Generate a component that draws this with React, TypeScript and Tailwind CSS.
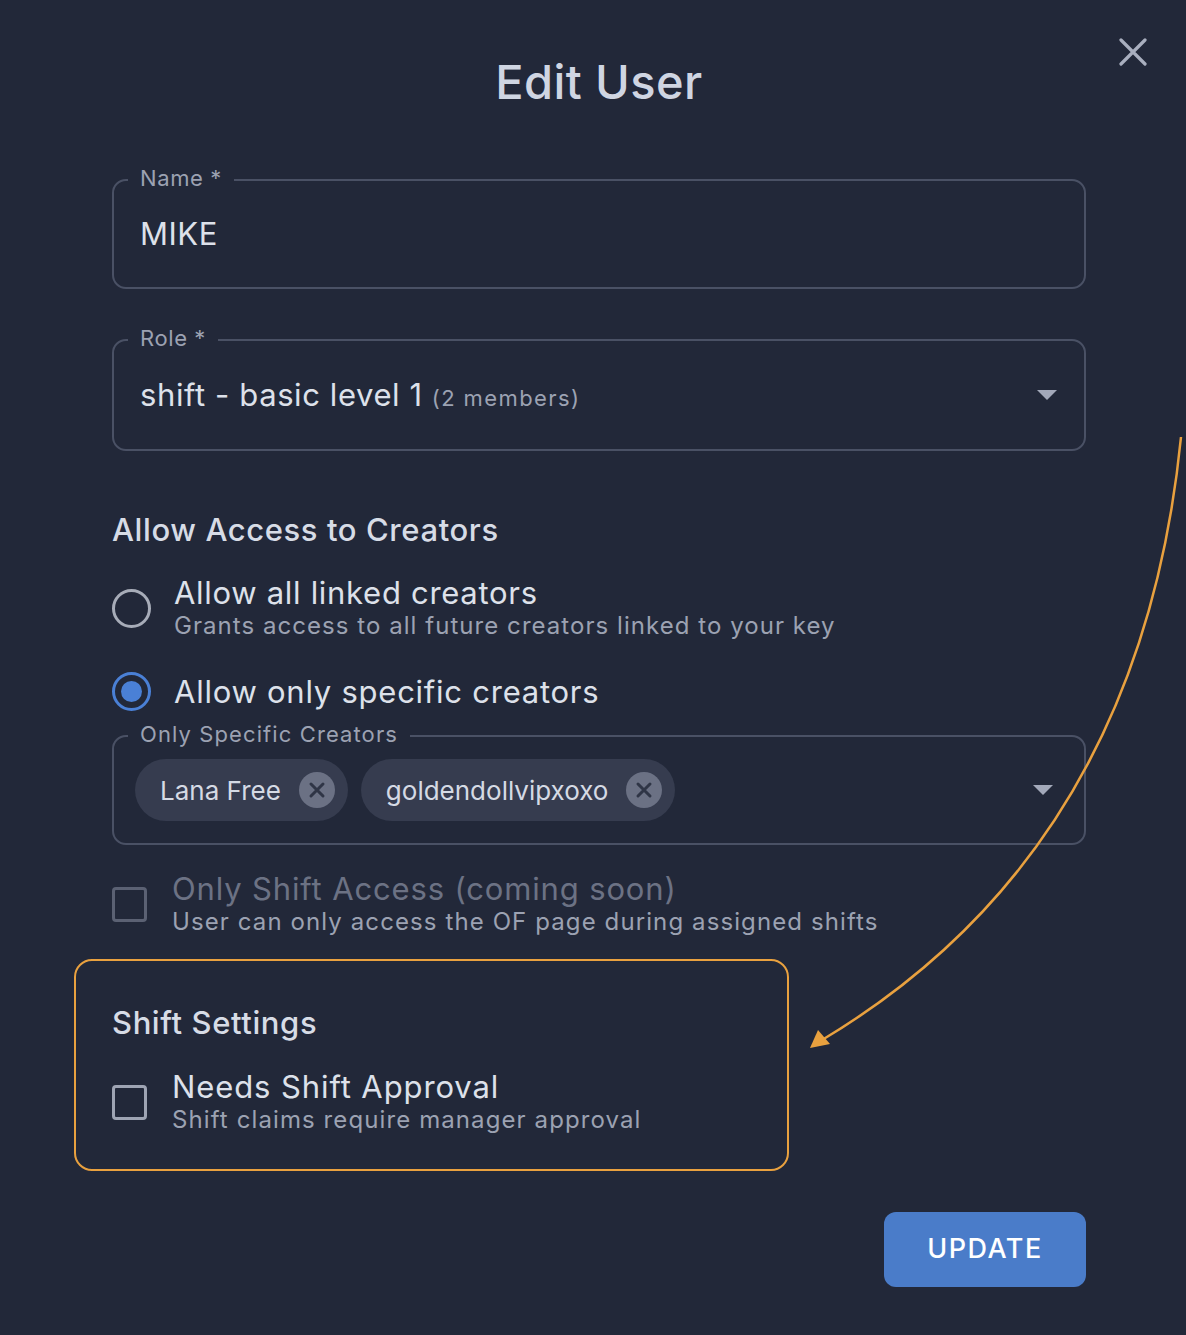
import React from 'react';

const font = { fontFamily: 'Inter, "Noto Sans", sans-serif' };

const Caret = () => (
  <svg width="22" height="12" viewBox="0 0 22 12" className="shrink-0">
    <path d="M1 1h20L11 11z" fill="#a3a9ba" />
  </svg>
);

const Chip = ({ label }: { label: string }) => (
  <div className="flex items-center h-[62px] rounded-full bg-[#363c4f] pl-[25px] pr-[13px] gap-[18px]">
    <span className="text-[26px] text-[#d5dae4]">{label}</span>
    <span className="w-[36px] h-[36px] rounded-full bg-[#6b7184] flex items-center justify-center">
      <svg width="18" height="18" viewBox="0 0 18 18">
        <path d="M3 3l12 12M15 3L3 15" stroke="#2f3546" strokeWidth="3" strokeLinecap="round" />
      </svg>
    </span>
  </div>
);

const Radio = ({ checked }: { checked?: boolean }) =>
  checked ? (
    <span className="w-[39px] h-[39px] rounded-full border-[3px] border-[#4a80d6] flex items-center justify-center shrink-0">
      <span className="w-[21px] h-[21px] rounded-full bg-[#4a80d6]" />
    </span>
  ) : (
    <span className="w-[39px] h-[39px] rounded-full border-[3px] border-[#a7acb8] shrink-0" />
  );

const Check = ({ dim }: { dim?: boolean }) => (
  <span
    className={`w-[35px] h-[35px] rounded-[4px] border-[3px] shrink-0 ${dim ? 'border-[#5b6173]' : 'border-[#9ea4b3]'}`}
  />
);

export default function App() {
  return (
    <div style={font} className="relative w-full min-h-[1335px] bg-[#222839] text-[#d7dce6] overflow-hidden">
      {/* close */}
      <button className="absolute top-[38px] left-[1119px]">
        <svg width="28" height="28" viewBox="0 0 28 28">
          <path d="M2 2l24 24M26 2L2 26" stroke="#a9afbf" strokeWidth="3.2" strokeLinecap="round" />
        </svg>
      </button>

      <h1 className="pt-[52px] pl-[12px] text-center text-[47px] leading-[60px] font-medium tracking-[0.4px] text-[#cfd5e2]">
        Edit User
      </h1>

      <div className="ml-[112px] w-[974px] flex flex-col">
        {/* Name */}
        <div className="relative mt-[67px] h-[110px] rounded-[14px] border-2 border-[#4a5165] flex items-center pl-[26px]">
          <span className="absolute -top-[16px] left-[14px] px-[12px] bg-[#222839] text-[22px] leading-[26px] tracking-[0.6px] text-[#9ca2b2]">
            Name *
          </span>
          <span className="text-[31px] tracking-[0.5px] text-[#dde1ea]">MIKE</span>
        </div>

        {/* Role */}
        <div className="relative mt-[50px] h-[112px] rounded-[14px] border-2 border-[#4a5165] flex items-center pl-[26px] pr-[26px]">
          <span className="absolute -top-[16px] left-[14px] px-[12px] bg-[#222839] text-[22px] leading-[26px] tracking-[0.6px] text-[#9ca2b2]">
            Role *
          </span>
          <span className="flex-1 flex items-baseline gap-[9px]">
            <span className="text-[31px] tracking-[0.6px] text-[#dde1ea]">shift - basic level 1</span>
            <span className="text-[22px] text-[#9ca2b2] tracking-[1.4px]">(2 members)</span>
          </span>
          <Caret />
        </div>

        <h2 className="mt-[61px] text-[31px] leading-[36px] font-medium tracking-[0.6px] text-[#d7dce6]">
          Allow Access to Creators
        </h2>

        <div className="mt-[27px] flex items-center gap-[23px]">
          <Radio />
          <div className="flex flex-col">
            <span className="text-[31px] leading-[36px] tracking-[0.7px] text-[#dde1ea]">Allow all linked creators</span>
            <span className="text-[24px] leading-[30px] tracking-[1.05px] text-[#9ca2b2]">
              Grants access to all future creators linked to your key
            </span>
          </div>
        </div>

        <div className="mt-[31px] flex items-center gap-[23px]">
          <Radio checked />
          <span className="text-[31px] leading-[36px] tracking-[0.75px] text-[#dde1ea]">Allow only specific creators</span>
        </div>

        {/* specific creators */}
        <div className="relative mt-[24px] h-[110px] rounded-[14px] border-2 border-[#4a5165] flex items-center pl-[21px] pr-[30px]">
          <span className="absolute -top-[16px] left-[14px] px-[12px] bg-[#222839] text-[22px] leading-[26px] tracking-[1.1px] text-[#9ca2b2]">
            Only Specific Creators
          </span>
          <div className="flex-1 flex gap-[13px]">
            <Chip label="Lana Free" />
            <Chip label="goldendollvipxoxo" />
          </div>
          <Caret />
        </div>

        <div className="mt-[26px] flex items-center gap-[25px]">
          <Check dim />
          <div className="flex flex-col">
            <span className="text-[31px] leading-[36px] tracking-[0.85px] text-[#6c7284]">Only Shift Access (coming soon)</span>
            <span className="text-[24px] leading-[30px] tracking-[1.1px] text-[#9ca2b2]">
              User can only access the OF page during assigned shifts
            </span>
          </div>
        </div>

        {/* shift settings */}
        <div className="mt-[22px] -ml-[38px] w-[715px] rounded-[18px] border-2 border-[#e9a13f] pl-[36px] pt-[44px] pb-[34px]">
          <h2 className="text-[31px] leading-[36px] font-medium tracking-[0.6px] text-[#d7dce6]">Shift Settings</h2>
          <div className="mt-[28px] flex items-center gap-[25px]">
            <Check />
            <div className="flex flex-col">
              <span className="text-[31px] leading-[36px] tracking-[0.9px] text-[#dde1ea]">Needs Shift Approval</span>
              <span className="text-[24px] leading-[30px] tracking-[1.1px] text-[#9ca2b2]">
                Shift claims require manager approval
              </span>
            </div>
          </div>
        </div>

        <div className="mt-[41px] flex justify-end">
          <button className="w-[202px] h-[75px] rounded-[12px] bg-[#4a7cc9] text-white text-[27px] font-medium tracking-[1.5px]">
            UPDATE
          </button>
        </div>
      </div>

      {/* annotation arrow */}
      <svg className="absolute inset-0 pointer-events-none" width="1186" height="1335" viewBox="0 0 1186 1335">
        <path d="M1181 437 Q1140 850 822 1040" fill="none" stroke="#e9a13f" strokeWidth="2.5" />
        <path d="M810 1048 L818 1030 L830 1044 Z" fill="#e9a13f" />
      </svg>
    </div>
  );
}
